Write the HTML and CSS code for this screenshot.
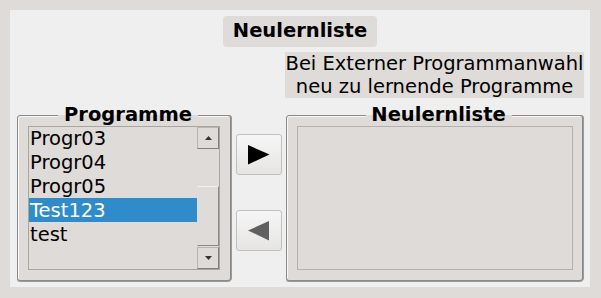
FILE: index.html
```html
<!DOCTYPE html>
<html lang="de">
<head>
<meta charset="utf-8">
<title>Neulernliste</title>
<link rel="stylesheet" href="styles.css">
</head>
<body>
<div class="panel">
  <div class="title">Neulernliste</div>
  <div class="info">Bei Externer Programmanwahl<br>neu zu lernende Programme</div>
  <div class="main">
    <div class="group group-left">
      <span class="legend">Programme</span>
      <div class="listbox">
        <div class="list">
          <div class="items">
            <div class="item">Progr03</div>
            <div class="item">Progr04</div>
            <div class="item">Progr05</div>
            <div class="item selected">Test123</div>
            <div class="item">test</div>
          </div>
        </div>
        <div class="scrollbar">
          <div class="sb-btn"><svg width="7" height="4" viewBox="0 0 7 4"><path d="M0 4 L3.5 0 L7 4 Z" fill="#333"/></svg></div>
          <div class="trough"><div class="thumb"></div></div>
          <div class="sb-btn"><svg width="7" height="4" viewBox="0 0 7 4"><path d="M0 0 L7 0 L3.5 4 Z" fill="#333"/></svg></div>
        </div>
      </div>
    </div>
    <div class="buttons">
      <button class="arrow-btn"><svg width="22" height="20" viewBox="0 0 22 20"><path d="M0 0 L21.5 9.5 L0 19.5 Z" fill="#000"/></svg></button>
      <button class="arrow-btn"><svg width="22" height="20" viewBox="0 0 22 20"><path d="M21 0 L21 19.5 L0 9.5 Z" fill="#606060"/></svg></button>
    </div>
    <div class="group group-right">
      <span class="legend">Neulernliste</span>
      <div class="listbox listbox-empty"></div>
    </div>
  </div>
</div>
</body>
</html>
```
FILE: styles.css
```css
* { box-sizing: border-box; }
html, body { margin: 0; padding: 0; }
body {
  width: 601px;
  height: 298px;
  background: #dedbd8;
  font-family: "DejaVu Sans", sans-serif;
  font-size: 19.5px;
  color: #000;
  overflow: hidden;
}
.panel {
  margin: 10px 0 0 10px;
  width: 580px;
  height: 277px;
  background: #efefef;
  display: flex;
  flex-direction: column;
  padding-top: 6px;
}
.title {
  align-self: center;
  background: #dedbd8;
  border-radius: 4px;
  font-weight: bold;
  height: 31px;
  line-height: 29px;
  padding: 0 10px;
}
.info {
  align-self: flex-end;
  margin: 5px 6px 0 0;
  width: 299px;
  height: 46px;
  background: #dedbd8;
  text-align: center;
  line-height: 23px;
  white-space: nowrap;
}
.main {
  display: flex;
  align-items: flex-start;
  margin-top: 17px;
  padding-left: 7px;
}
.group {
  position: relative;
  height: 166px;
  border: 1px solid #8a8a8a;
  border-radius: 3px;
  background: #dedbd8;
  box-shadow: inset 1px 1px 0 #f7f7f7, 0 1px 0 #9a9a9a, 1px 0 0 #9a9a9a;
  padding: 10px;
}
.group-left { width: 214px; }
.group-right { width: 297px; padding-right: 9px; }
.legend {
  position: absolute;
  top: -12px;
  left: 50%;
  transform: translateX(-50%);
  margin-left: 4px;
  padding: 0 6px;
  font-weight: bold;
  line-height: 22px;
  white-space: nowrap;
  background: linear-gradient(to bottom, #efefef 0 11px, #dedbd8 11px);
}
.listbox {
  height: 144px;
  border: 1px solid #a8a6a3;
  display: flex;
  background: #dedbd8;
}
.listbox-empty {
  border-color: #b4b2af;
}
.list {
  flex: 1;
  overflow: hidden;
}
.items { margin-top: -1px; }
.item {
  height: 24px;
  line-height: 23px;
  padding: 1px 0 0 1px;
  white-space: nowrap;
}
.item.selected {
  background: #308bcb;
  color: #fff;
}
.scrollbar {
  width: 22px;
  display: flex;
  flex-direction: column;
}
.sb-btn {
  height: 22px;
  border: 1px solid;
  border-color: #b8b6b2 #7e7e7e #7e7e7e #b8b6b2;
  display: flex;
  align-items: center;
  justify-content: center;
}
.trough {
  flex: 1;
  display: flex;
  flex-direction: column;
}
.thumb {
  margin-top: 37px;
  height: 60px;
  border: 1px solid;
  border-color: #f2f2f2 #8a8a8a #8a8a8a #dedbd8;
}
.buttons {
  display: flex;
  flex-direction: column;
  gap: 35px;
  margin: 19px 4px 0 5px;
}
.arrow-btn {
  width: 46px;
  height: 41px;
  border: 1px solid #c2c0bd;
  border-radius: 3px;
  background: linear-gradient(to bottom, #f6f6f6, #e6e5e3);
  padding: 0;
  display: flex;
  align-items: center;
  justify-content: center;
}
```
